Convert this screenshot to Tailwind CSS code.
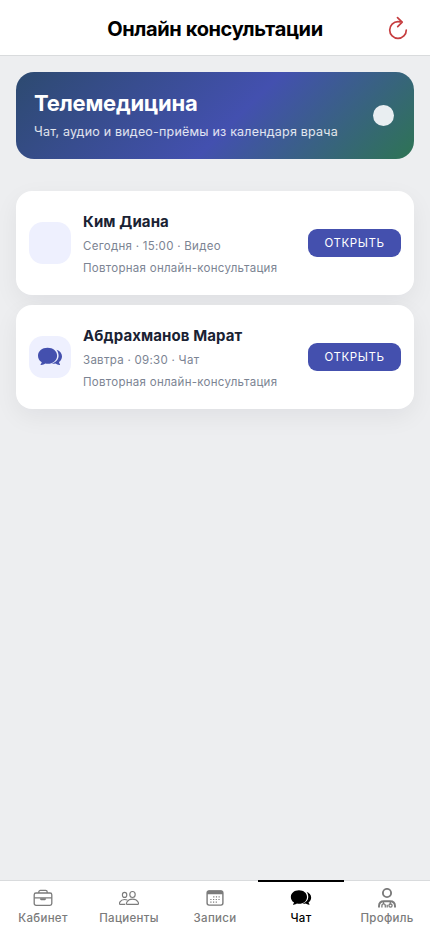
<!DOCTYPE html>
<html lang="ru">
<head>
<meta charset="utf-8">
<meta name="viewport" content="width=device-width, initial-scale=1">
<title>Онлайн консультации</title>
<script src="https://cdn.jsdelivr.net/npm/@tailwindcss/browser@4"></script>
</head>
<body class="font-['Inter',sans-serif]">
<svg class="hidden">
  <symbol id="chat" viewBox="0 0 26 22">
    <path d="M10.600 1.800C5 1.800 1 5.200 1 9.700c0 2.700 1.400 5 3.500 6.400.5.4-.1 1.400-.8 2.200-.4.500 0 .9.600.8 1.600-.2 3-.8 4-1.500.8.200 1.500.2 2.300.2 5.500 0 9.500-3.500 9.500-8.100s-4-7.900-9.500-7.900z"/>
    <path d="M19.500 3.700c3.300 1.200 5.500 3.500 5.500 6.600 0 2.400-1.100 4.400-3 5.800 0 .8.400 1.400.9 2.100.4.500 0 .9-.5.800-1.500-.2-2.700-.8-3.900-1.600-1.200.4-2.500.5-3.700.3 4.200-1.600 6.800-4.300 6.800-7.900 0-2.300-.8-4.500-2.100-6.100z"/>
  </symbol>
</svg>
<div class="flex h-[932px] w-[430px] flex-col overflow-hidden bg-[#edeef0]">
  <header class="grid h-14 shrink-0 grid-cols-[60px_1fr_60px] items-center border-b border-[#d9dbdd] bg-white">
    <h1 class="col-start-2 pt-[3px] text-center text-[20px] leading-7 font-bold tracking-[-0.37px] whitespace-nowrap text-black">Онлайн консультации</h1>
    <button class="flex justify-center pr-1" aria-label="Обновить">
      <svg class="h-6 w-6" viewBox="0 0 24 24" fill="none" stroke="#c63d3f" stroke-width="1.700" stroke-linecap="round" stroke-linejoin="round"><path d="M20.300 14a8.300 8.300 0 1 1-8.300-8.300c1.500 0 2.900.1 4.200.4M11.500 1.600 16.200 6.100l-4.500 4.500"/></svg>
    </button>
  </header>
  <main class="flex-1 px-4 pt-4">
    <section class="flex h-[87px] items-center justify-between rounded-[18px] bg-[linear-gradient(135deg,#2d4a70_0%,#4350af_55%,#2e7454_100%)] pr-5 pl-[18px]">
      <div>
        <h2 class="text-[22px] leading-[27px] font-bold tracking-[-0.25px] text-white">Телемедицина</h2>
        <p class="mt-[5px] text-[12.5px] leading-5 tracking-[0.2px] whitespace-nowrap text-white/85">Чат, аудио и видео-приёмы из календаря врача</p>
      </div>
      <div class="h-[21px] w-[21px] rounded-full bg-[#e9eef1]"></div>
    </section>
    <div class="mt-8 flex flex-col gap-2.5">
      <article class="flex h-[104px] items-center rounded-2xl bg-white px-[13px] shadow-[0_8px_24px_rgba(15,23,42,0.06)]">
        <div class="h-[42px] w-[42px] shrink-0 rounded-[14px] bg-[#eef0fe]"></div>
        <div class="ml-3 min-w-0 flex-1 pt-[3px] whitespace-nowrap">
          <h3 class="text-[15px] leading-6 font-bold tracking-[0.1px] text-[#1a2233]">Ким Диана</h3>
          <p class="mt-px text-[11.5px] leading-[22px] tracking-[0.28px] text-[#7c8493]">Сегодня · 15:00 · Видео</p>
          <p class="text-[11.5px] leading-[22px] tracking-[0.28px] text-[#7c8493]">Повторная онлайн-консультация</p>
        </div>
        <button class="h-7 w-[93px] shrink-0 rounded-[9px] bg-[#4450ae] pt-0.5 text-[11.5px] tracking-[0.6px] text-white">ОТКРЫТЬ</button>
      </article>
      <article class="flex h-[104px] items-center rounded-2xl bg-white px-[13px] shadow-[0_8px_24px_rgba(15,23,42,0.06)]">
        <div class="flex h-[42px] w-[42px] shrink-0 items-center justify-center rounded-[14px] bg-[#eef0fe] text-[#4450ae]"><svg class="h-[22px] w-[26px]" fill="currentColor"><use href="#chat"/></svg></div>
        <div class="ml-3 min-w-0 flex-1 pt-[3px] whitespace-nowrap">
          <h3 class="text-[15px] leading-6 font-bold tracking-[0.1px] text-[#1a2233]">Абдрахманов Марат</h3>
          <p class="mt-px text-[11.5px] leading-[22px] tracking-[0.28px] text-[#7c8493]">Завтра · 09:30 · Чат</p>
          <p class="text-[11.5px] leading-[22px] tracking-[0.28px] text-[#7c8493]">Повторная онлайн-консультация</p>
        </div>
        <button class="h-7 w-[93px] shrink-0 rounded-[9px] bg-[#4450ae] pt-0.5 text-[11.5px] tracking-[0.6px] text-white">ОТКРЫТЬ</button>
      </article>
    </div>
  </main>
  <nav class="grid h-[52px] shrink-0 grid-cols-5 bg-white text-[11.5px] font-medium tracking-[0.3px] text-[#7b7b7b]">
    <a class="flex flex-col items-center border-t border-[#d9dbdd] pt-[7px]">
      <svg class="h-5 w-5" viewBox="0 0 20 20" fill="none" stroke="currentColor" stroke-width="1.300" stroke-linejoin="round"><rect x="1.200" y="5" width="17.600" height="12.400" rx="1.800"/><path d="M5.800 5V4c0-.9.700-1.600 1.600-1.600h5.200c.9 0 1.600.7 1.600 1.600v1M1.200 9.900h17.600"/><path d="M7.500 10.900h5l-.7.700H8.200z" fill="currentColor"/></svg>
      <span class="leading-5">Кабинет</span>
    </a>
    <a class="flex flex-col items-center border-t border-[#d9dbdd] pt-[7px]">
      <svg class="h-5 w-5" viewBox="0 0 20 20" fill="none" stroke="currentColor" stroke-width="1.150" stroke-linejoin="round"><ellipse cx="5.600" cy="6.900" rx="2.200" ry="2.500"/><ellipse cx="13.500" cy="6.500" rx="2.700" ry="3"/><path d="M7.800 16.300c-.5-.3-.3-1.500.3-2.500 1-1.700 3-2.700 5.400-2.700s4.400 1 5.400 2.700c.6 1 .8 2.200.2 2.500zM6.300 16.300H.9c-.5-.3-.4-1.500.1-2.400.9-1.500 2.600-2.400 4.600-2.400 1 0 1.900.2 2.700.6"/></svg>
      <span class="leading-5">Пациенты</span>
    </a>
    <a class="flex flex-col items-center border-t border-[#d9dbdd] pt-[7px]">
      <svg class="h-5 w-5" viewBox="0 0 20 20" fill="none" stroke="currentColor"><rect x="2.100" y="2.900" width="15.800" height="14.200" rx="2" stroke-width="1.400"/><path d="M2 6.200V4.400c0-1.200.8-2 2-2h12c1.200 0 2 .8 2 2v1.800z" fill="currentColor" stroke="none"/><path d="M8.200 8.900h6.500M5.300 11.500h9.400M5.300 14.100h6.800" stroke-width="1.100" stroke-dasharray="1.200 1.500"/></svg>
      <span class="leading-5">Записи</span>
    </a>
    <a class="flex flex-col items-center border-t-2 border-black pt-1.5 text-black">
      <svg class="h-5 w-[22px]" viewBox="0 0 26 22" fill="currentColor"><use href="#chat"/></svg>
      <span class="leading-5">Чат</span>
    </a>
    <a class="flex flex-col items-center border-t border-[#d9dbdd] pt-[7px]">
      <svg class="h-5 w-5" viewBox="0 0 20 20" fill="none" stroke="currentColor" stroke-width="1.900"><circle cx="10" cy="5" r="4.100"/><path d="M2 19.500v-1.500c0-3.200 2.200-4.800 5-4.800h6c2.800 0 5 1.600 5 4.800v1.500"/><path d="M6.500 13.500v2.300M13.300 13.500v2.300M4.900 19.500v-1.600c0-1.200.6-2 1.700-2s1.700.8 1.700 2v1.600M10.200 16.800v2.700" stroke-width="1.300"/><circle cx="13.500" cy="17.600" r="1.600" stroke-width="1.300"/></svg>
      <span class="leading-5">Профиль</span>
    </a>
  </nav>
</div>
</body>
</html>
